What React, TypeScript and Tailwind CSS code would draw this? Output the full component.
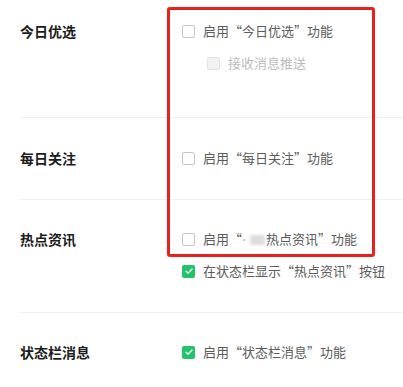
import React from "react";

const FONT = { fontFamily: '"Noto Sans CJK SC", "Noto Sans", sans-serif' };

function Check({ checked = false, disabled = false }: { checked?: boolean; disabled?: boolean }) {
  if (checked) {
    return (
      <span className="flex h-[13px] w-[13px] shrink-0 items-center justify-center rounded-[2px] bg-[#22c36b]">
        <svg viewBox="0 0 12 12" className="h-[10px] w-[10px]" fill="none" stroke="white" strokeWidth="1.6" strokeLinecap="round" strokeLinejoin="round">
          <path d="M2.5 6.2 5 8.6 9.6 3.6" />
        </svg>
      </span>
    );
  }
  return (
    <span
      className={
        disabled
          ? "h-[13px] w-[13px] shrink-0 rounded-[2px] border border-[#e2e2e2] bg-[#f2f2f2]"
          : "h-[13px] w-[13px] shrink-0 rounded-[2px] border border-[#c6c6c6] bg-white"
      }
    />
  );
}

function Option({ checked, disabled, indent, children }: { checked?: boolean; disabled?: boolean; indent?: boolean; children: React.ReactNode }) {
  return (
    <div className={`flex h-5 items-center gap-[8px] ${indent ? "pl-[25px]" : ""}`}>
      <Check checked={checked} disabled={disabled} />
      <span className={`text-[13px] leading-5 ${disabled ? "text-[#bcbcbc]" : "text-[#5c5c5c]"}`}>{children}</span>
    </div>
  );
}

function Row({ label, className, children }: { label: string; className: string; children: React.ReactNode }) {
  return (
    <div className={`flex ${className}`}>
      <div className="w-[182px] shrink-0 pl-5 text-[14px] font-bold leading-5 text-[#1c1c1c]">{label}</div>
      <div className="flex flex-col gap-3">{children}</div>
    </div>
  );
}

export default function App() {
  return (
    <div className="relative h-[387px] w-[403px] overflow-hidden bg-white" style={FONT}>
      <Row label="今日优选" className="pt-[21px] pb-[44px]">
        <Option>启用“今日优选”功能</Option>
        <Option disabled indent>接收消息推送</Option>
      </Row>
      <div className="ml-5 h-px bg-[#f0f0f0]" />
      <Row label="每日关注" className="pt-[30px] pb-[31px]">
        <Option>启用“每日关注”功能</Option>
      </Row>
      <div className="ml-5 h-px bg-[#f0f0f0]" />
      <Row label="热点资讯" className="pt-[29px] pb-[31px]">
        <Option>
          启用“
          <span className="relative inline-block h-[10px] w-[24px] align-middle">
            <span className="absolute left-[1px] top-[4px] h-[2px] w-[2px] rounded-full bg-[#bbb]" />
            <span className="absolute left-[8px] top-0 h-[10px] w-[15px] rounded-[2px] bg-[#dcdcdc] blur-[1.5px]" />
          </span>
          热点资讯”功能
        </Option>
        <Option checked>在状态栏显示“热点资讯”按钮</Option>
      </Row>
      <div className="ml-5 h-px bg-[#f0f0f0]" />
      <Row label="状态栏消息" className="pt-[29px] pb-[31px]">
        <Option checked>启用“状态栏消息”功能</Option>
      </Row>

      {/* annotation box */}
      <div className="pointer-events-none absolute left-[167px] top-[7px] h-[250px] w-[208px] rounded-[3px] border-[3px] border-[#e8211f]" />
    </div>
  );
}
